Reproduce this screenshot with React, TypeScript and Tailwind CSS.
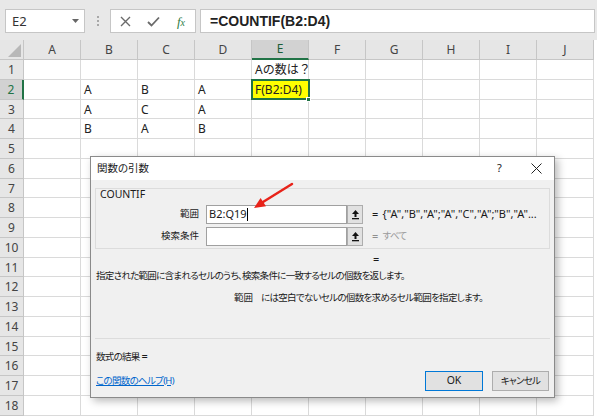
import React from "react";

const COLS = ["A", "B", "C", "D", "E", "F", "G", "H", "I", "J"];

const cellData: Record<string, string> = {
  "1E": "Aの数は？",
  "2B": "A",
  "2C": "B",
  "2D": "A",
  "3B": "A",
  "3C": "C",
  "3D": "A",
  "4B": "B",
  "4C": "A",
  "4D": "B",
};

function UploadBtn() {
  return (
    <div className="w-[16px] h-[19px] border border-[#adadad] bg-[#e1e1e1] flex items-center justify-center shrink-0">
      <svg width="9" height="11" viewBox="0 0 9 11">
        <path d="M4.5 1 L8 5 L5.5 5 L5.5 8 L3.5 8 L3.5 5 L1 5 Z" fill="#111" />
        <rect x="1" y="9" width="7" height="1.3" fill="#111" />
      </svg>
    </div>
  );
}

export default function App() {
  const rows = Array.from({ length: 18 }, (_, i) => i + 1);
  return (
    <div className="relative w-[597px] h-[418px] overflow-hidden bg-white font-['Noto_Sans','Noto_Sans_CJK_JP',sans-serif] text-[#222]">
      {/* Top formula bar */}
      <div className="h-[40px] bg-[#e8e8e8] flex items-center pl-[5px] pt-[2px]">
        <div className="w-[80px] h-[24px] bg-white border border-[#c6c6c6] flex items-center justify-between pl-[6px] pr-[5px]">
          <span className="text-[13px] text-[#333] leading-none">E2</span>
          <svg width="7" height="4" viewBox="0 0 7 4">
            <path d="M0 0 L7 0 L3.5 4 Z" fill="#666" />
          </svg>
        </div>
        <div className="ml-[11px] w-[3px] flex flex-col gap-[2px] items-center">
          <div className="w-[2px] h-[2px] bg-[#a8a8a8]" />
          <div className="w-[2px] h-[2px] bg-[#a8a8a8]" />
          <div className="w-[2px] h-[2px] bg-[#a8a8a8]" />
        </div>
        <div className="ml-[11px] w-[86px] h-[24px] bg-white border border-[#c6c6c6] flex items-center">
          <div className="w-[28px] flex justify-center">
            <svg width="11" height="11" viewBox="0 0 11 11">
              <path d="M1 1 L10 10 M10 1 L1 10" stroke="#6a6a6a" strokeWidth="1.4" />
            </svg>
          </div>
          <div className="w-[28px] flex justify-center">
            <svg width="13" height="11" viewBox="0 0 13 11">
              <path d="M1 6 L4.5 9.5 L12 1.5" stroke="#6a6a6a" strokeWidth="1.8" fill="none" />
            </svg>
          </div>
          <div className="w-[28px] flex justify-center">
            <span className="text-[13px] italic text-[#2e7d46] font-['Liberation_Serif',serif] leading-none">
              f<span className="text-[10px]">x</span>
            </span>
          </div>
        </div>
        <div className="ml-[4px] flex-1 mr-[2px] h-[24px] bg-white border border-[#c6c6c6] flex items-center pl-[9px]">
          <span className="text-[14px] font-bold text-[#222] font-['Liberation_Sans',sans-serif]">=COUNTIF(B2:D4)</span>
        </div>
      </div>

      {/* Column header */}
      <div className="flex h-[20px]">
        <div className="relative w-[24px] h-[20px] bg-[#e6e6e6] border-r border-b border-[#c6c6c6]">
          <svg className="absolute right-[2px] bottom-[2px]" width="13" height="13" viewBox="0 0 13 13">
            <path d="M13 0 L13 13 L0 13 Z" fill="#b8b8b8" />
          </svg>
        </div>
        {COLS.map((c) =>
          c === "E" ? (
            <div
              key={c}
              className="w-[57px] h-[20px] bg-[#d2d2d2] border-r border-[#c6c6c6] border-b-2 border-b-[#217346] text-center text-[12px] leading-[18px] text-[#1b5e37]"
            >
              {c}
            </div>
          ) : (
            <div
              key={c}
              className="w-[57px] h-[20px] bg-[#e6e6e6] border-r border-b border-[#c6c6c6] text-center text-[12px] leading-[19px] text-[#444]"
            >
              {c}
            </div>
          )
        )}
      </div>

      {/* Rows */}
      {rows.map((r) => (
        <div key={r} className="flex h-[19.75px]">
          {r === 2 ? (
            <div className="w-[24px] h-full bg-[#d2d2d2] border-r-2 border-r-[#217346] border-b border-[#c6c6c6] text-center text-[12px] leading-[19px] text-[#217346]">
              {r}
            </div>
          ) : (
            <div className="w-[24px] h-full bg-[#e6e6e6] border-r border-b border-[#c6c6c6] text-center text-[12px] leading-[19px] text-[#444]">
              {r}
            </div>
          )}
          {COLS.map((c) => {
            const key = `${r}${c}`;
            if (key === "2E") {
              return (
                <div key={c} className="relative w-[57px] h-full bg-[#ffff00] border-r border-b border-[#dadada] pl-[3px] text-[12px] leading-[19px] whitespace-nowrap">
                  F(B2:D4)
                  <div className="absolute -left-[1px] -top-[1px] w-[59px] h-[21px] border-2 border-[#217346]" />
                  <div className="absolute -right-[3px] -bottom-[3px] w-[5px] h-[5px] bg-[#217346] border border-white" />
                </div>
              );
            }
            return (
              <div key={c} className="w-[57px] h-full border-r border-b border-[#dadada] pl-[3px] text-[12px] leading-[19px] whitespace-nowrap text-[#222]">
                {cellData[key] ?? ""}
              </div>
            );
          })}
        </div>
      ))}

      {/* Dialog */}
      <div className="absolute left-[90px] top-[156px] w-[465px] h-[242px] border border-[#8a8a8a] bg-[#f0f0f0] shadow-[3px_3px_8px_rgba(0,0,0,0.28)] flex flex-col text-[9.5px] tracking-[-0.7px] text-[#1a1a1a] [font-feature-settings:'palt']">
        <div className="h-[23px] bg-white flex items-center pl-[6px]">
          <span className="text-[10.5px] tracking-normal">関数の引数</span>
          <span className="ml-auto text-[11px] mr-[30px]">?</span>
          <svg className="mr-[12px]" width="11" height="11" viewBox="0 0 11 11">
            <path d="M0.5 0.5 L10.5 10.5 M10.5 0.5 L0.5 10.5" stroke="#222" strokeWidth="1" />
          </svg>
        </div>
        <div className="flex-1 flex flex-col px-[4px]">
          {/* group box */}
          <div className="mt-[8px] h-[61px] border border-[#dcdcdc] flex flex-col">
            <div className="h-[10px] leading-[10px] pl-[4px] text-[10.5px] tracking-normal">COUNTIF</div>
            <div className="mt-[6px] h-[19px] flex items-center">
              <div className="w-[103px] text-right tracking-normal">範囲</div>
              <div className="ml-[7px] w-[141px] h-[19px] bg-white border border-[#a0a0a0] flex items-center pl-[2px]">
                <span className="text-[11px] tracking-normal">B2:Q19</span>
                <div className="w-[1px] h-[13px] bg-black" />
              </div>
              <UploadBtn />
              <span className="ml-[9px] text-[11px]">=</span>
              <span className="ml-[5px] whitespace-nowrap text-[11px] tracking-normal">{'{"A","B","A";"A","C","A";"B","A"...'}</span>
            </div>
            <div className="mt-[3px] h-[19px] flex items-center">
              <div className="w-[103px] text-right tracking-normal">検索条件</div>
              <div className="ml-[7px] w-[141px] h-[19px] bg-white border border-[#a0a0a0]" />
              <UploadBtn />
              <span className="ml-[9px] text-[11px] text-[#8f8f8f]">=</span>
              <span className="ml-[5px] text-[#9a9a9a]">すべて</span>
            </div>
          </div>
          <div className="h-[20px] leading-[20px] pl-[278px] text-[11px]">=</div>
          <div className="h-[14px] leading-[14px] pl-[1px] whitespace-nowrap">
            指定された範囲に含まれるセルのうち、検索条件に一致するセルの個数を返します。
          </div>
          <div className="mt-[8px] h-[14px] leading-[14px] pl-[139px] flex gap-[8px] whitespace-nowrap">
            <span className="tracking-normal">範囲</span>
            <span>には空白でないセルの個数を求めるセル範囲を指定します。</span>
          </div>
          <div className="flex-1" />
          <div className="h-[1px] bg-[#dcdcdc]" />
          <div className="mt-[10px] h-[14px] leading-[14px] pl-[1px]">
            数式の結果 <span className="text-[11px]">=</span>
          </div>
          <div className="mt-[8px] h-[20px] flex items-center pl-[1px] mb-[6px]">
            <span className="text-[#0066cc] underline">この関数のヘルプ(H)</span>
            <div className="ml-auto w-[58px] h-[20px] border border-[#0078d7] bg-[#e1e1e1] flex items-center justify-center text-[10.5px] tracking-normal">
              OK
            </div>
            <div className="ml-[9px] mr-[1px] w-[57px] h-[20px] border border-[#adadad] bg-[#e1e1e1] flex items-center justify-center">
              キャンセル
            </div>
          </div>
        </div>
      </div>

      {/* Red arrow */}
      <svg className="absolute left-[250px] top-[180px]" width="46" height="32" viewBox="0 0 46 32">
        <path d="M42 4 L13 22" stroke="#e8231a" strokeWidth="2.5" strokeLinecap="round" />
        <path d="M4 28 L16 26.3 L10.6 17.9 Z" fill="#e8231a" />
      </svg>
    </div>
  );
}
